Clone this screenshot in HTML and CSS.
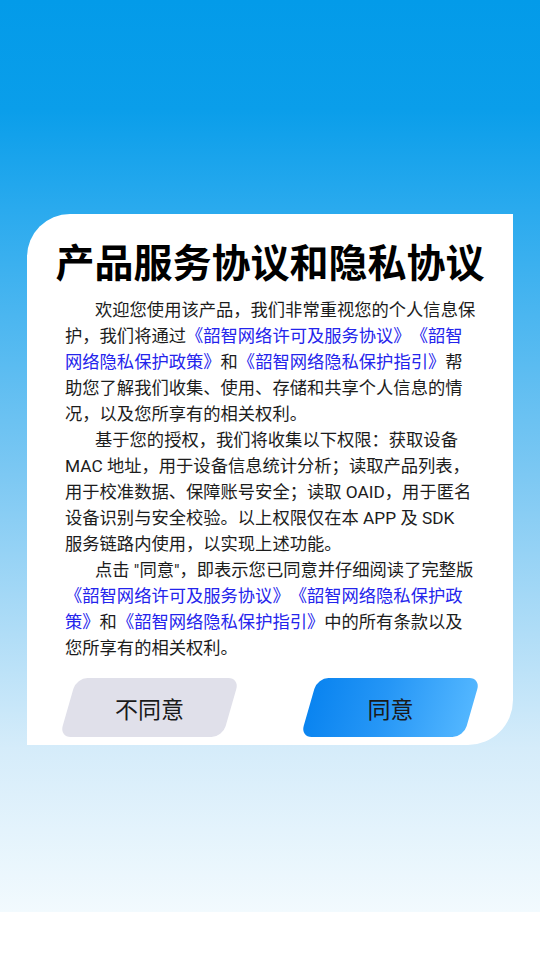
FILE: index.html
```html
<!DOCTYPE html>
<html lang="zh-CN">
<head>
<meta charset="utf-8">
<title>产品服务协议和隐私协议</title>
<link rel="stylesheet" href="styles.css">
</head>
<body>
<div class="bg">
  <div class="card">
    <h1 class="title">产品服务协议和隐私协议</h1>
    <div class="body">
      <p class="para">欢迎您使用该产品，我们非常重视您的个人信息保护，我们将通过<span class="link">《韶智网络许可及服务协议》</span><span class="link">《韶智网络隐私保护政策》</span>和<span class="link">《韶智网络隐私保护指引》</span>帮助您了解我们收集、使用、存储和共享个人信息的情况，以及您所享有的相关权利。</p>
      <p class="para">基于您的授权，我们将收集以下权限：获取设备MAC 地址，用于设备信息统计分析；读取产品列表，用于校准数据、保障账号安全；读取 OAID，用于匿名设备识别与安全校验。以上权限仅在本 APP 及 SDK<br>服务链路内使用，以实现上述功能。</p>
      <p class="para">点击 "同意"，即表示您已同意并仔细阅读了完整版<span class="link">《韶智网络许可及服务协议》</span><span class="link">《韶智网络隐私保护政策》</span>和<span class="link">《韶智网络隐私保护指引》</span>中的所有条款以及您所享有的相关权利。</p>
    </div>
    <div class="actions">
      <button class="btn btn-no">不同意</button>
      <button class="btn btn-yes">同意</button>
    </div>
  </div>
</div>
</body>
</html>
```
FILE: styles.css
```css
html, body {
  margin: 0;
  padding: 0;
  background: #ffffff;
}
body {
  width: 540px;
  height: 960px;
  font-family: Roboto, "Noto Sans CJK SC", sans-serif;
}
.bg {
  height: 912px;
  box-sizing: border-box;
  padding-top: 214px;
  padding-left: 27px;
  background: linear-gradient(180deg, #039be9 0%, #0a9eea 12%, #2aaaee 23%, #7cc8f3 52%, #d5ecfa 82%, #f2fafe 100%);
}
.card {
  width: 486px;
  height: 531px;
  box-sizing: border-box;
  background: #ffffff;
  border-radius: 43px 0 45px 0;
  padding: 22px 0 8px 0;
  display: flex;
  flex-direction: column;
}
.title {
  margin: 0;
  font-family: "Noto Sans CJK SC", sans-serif;
  font-size: 39px;
  font-weight: 700;
  line-height: 48px;
  color: #000000;
  text-align: center;
}
.body {
  margin-top: 13px;
  padding: 0 36px 0 38px;
}
.para {
  margin: 0;
  font-size: 17.3px;
  line-height: 26px;
  color: #1c1c1c;
  text-indent: 30px;
  text-spacing-trim: space-all;
  font-feature-settings: "halt" 0, "chws" 0;
}
.link {
  color: #2424ec;
}
.actions {
  margin-top: auto;
  display: flex;
  justify-content: space-between;
  padding: 0 41px;
}
.btn {
  position: relative;
  width: 163px;
  height: 59px;
  border: 0;
  padding: 0;
  background: transparent;
  font-family: "Noto Sans CJK SC", sans-serif;
  font-size: 23px;
  color: #1a1a1a;
  z-index: 0;
}
.btn::before {
  content: "";
  position: absolute;
  inset: 0;
  border-radius: 11px;
  transform: skewX(-16deg);
  z-index: -1;
}
.btn-no::before {
  background: #e0e0ea;
}
.btn-yes::before {
  background: linear-gradient(90deg, #0a84f0 0%, #2596f6 45%, #52b6ff 100%);
}
```
